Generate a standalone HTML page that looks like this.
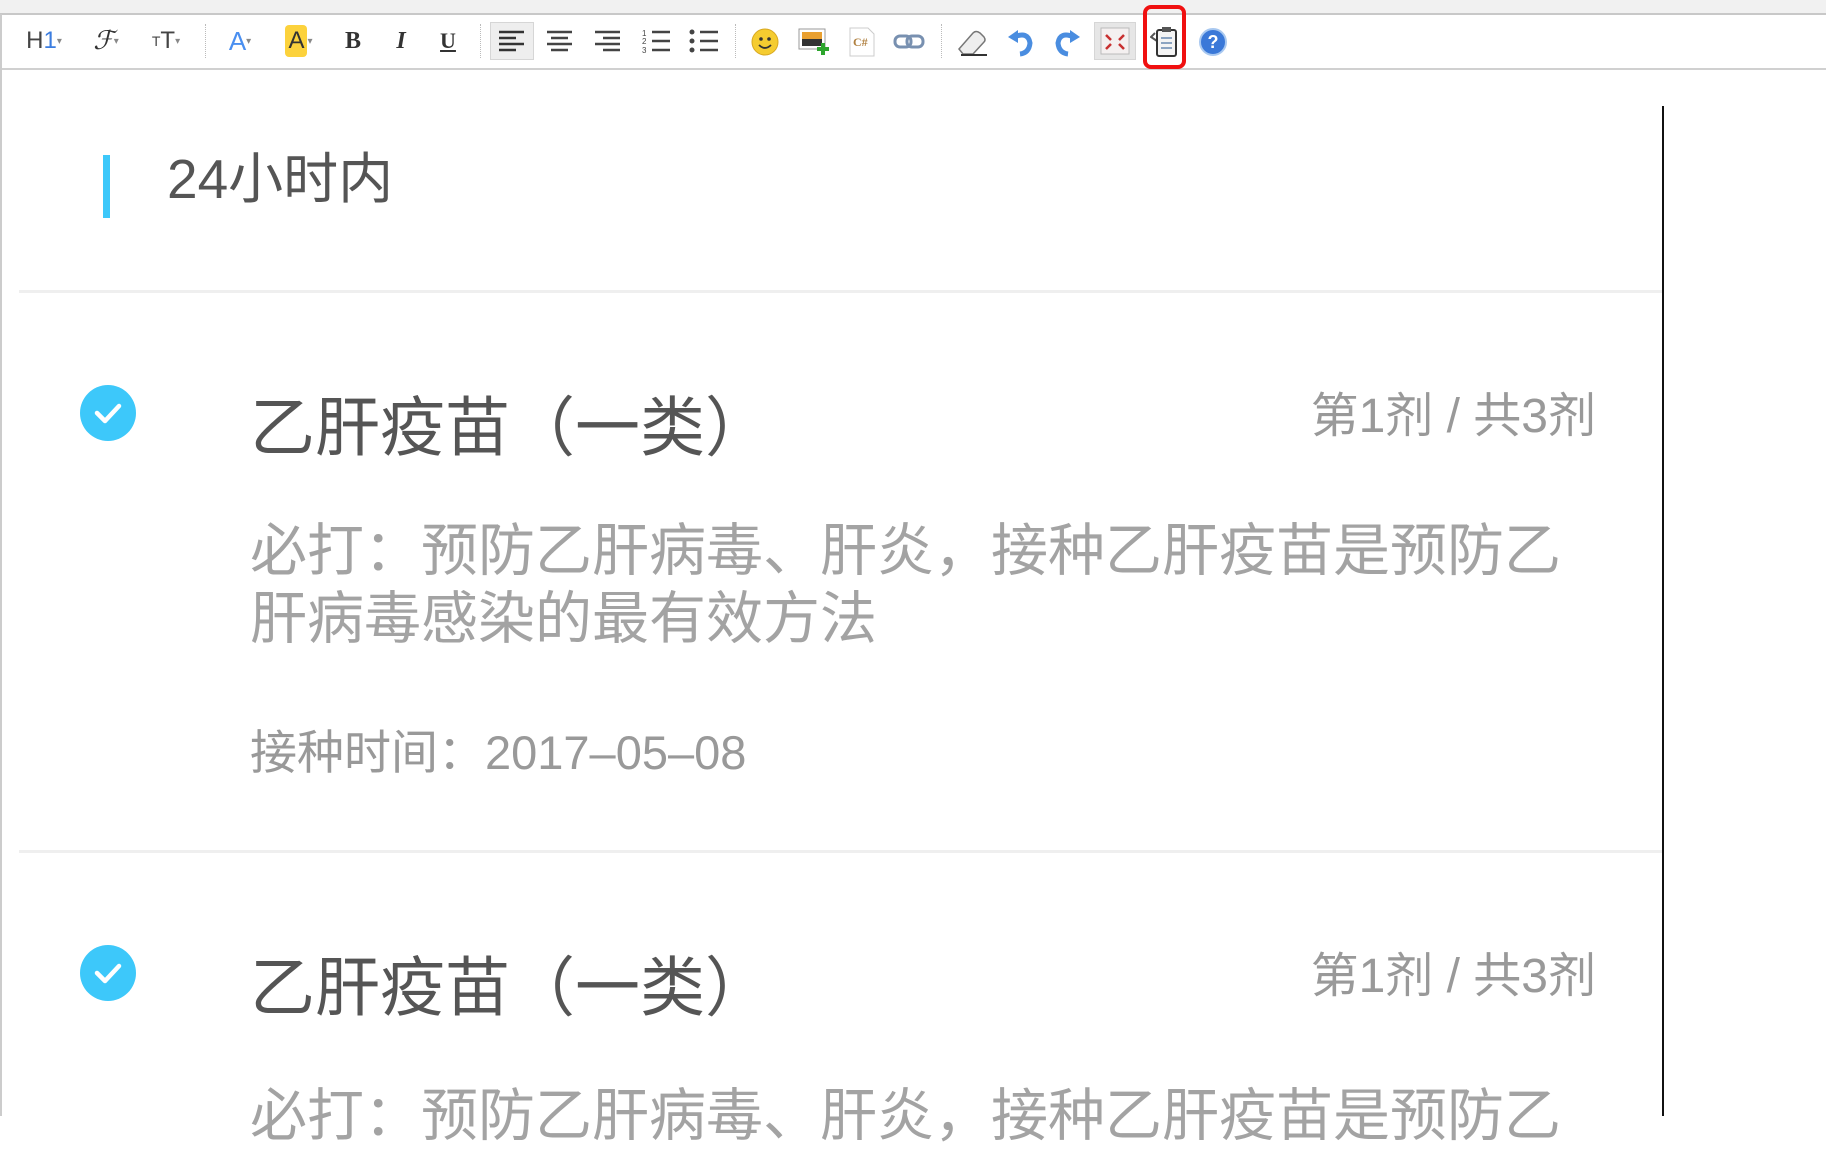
<!DOCTYPE html>
<html><head><meta charset="utf-8"><style>
*{margin:0;padding:0;box-sizing:border-box}
body{width:1826px;height:1116px;overflow:hidden;background:#fff;position:relative;font-family:"Liberation Sans","Noto Sans CJK SC",sans-serif}
.a{position:absolute;line-height:1;white-space:nowrap}
.ic{position:absolute;top:26px;height:30px;display:flex;align-items:center;justify-content:center;font-size:22px;color:#333}
.sep{position:absolute;top:24px;height:34px;border-left:1px dotted #bbb}
.t{color:#555;font-size:65px}
.r{color:#999;font-size:48px}
.d{color:#a3a3a3;font-size:57px;line-height:68px}
.dt{color:#999;font-size:47px}
.chk{position:absolute;width:56px;height:56px;border-radius:50%;background:#3dc8fa}
.hr{position:absolute;left:19px;width:1643px;height:3px;background:#efefef}
</style></head><body>
<div class="a" style="left:0;top:0;width:1826px;height:14px;background:#f1f1f1"></div>
<div class="a" style="left:0;top:13px;width:1826px;height:2px;background:#c8c8c8"></div>
<div class="a" style="left:0;top:68px;width:1826px;height:2px;background:#d0d0d0"></div>
<div class="a" style="left:0;top:14px;width:2px;height:1102px;background:#ccc"></div>

<div class="ic" style="left:20px;width:48px;font-size:24px;color:#444">H<span style="color:#3b7de0">1</span><span style="font-size:10px;color:#888">▾</span></div>
<div class="ic" style="left:86px;width:40px;font-family:'Liberation Serif';font-style:italic;font-size:26px">ℱ<span style="font-size:10px;color:#888;font-style:normal">▾</span></div>
<div class="ic" style="left:145px;width:42px;font-size:24px;color:#444"><span style="font-size:14px">T</span>T<span style="font-size:10px;color:#888">▾</span></div>
<div class="sep" style="left:205px"></div>
<div class="ic" style="left:221px;width:38px;font-size:26px;color:#4a8ff0">A<span style="font-size:10px;color:#888">▾</span></div>
<div class="ic" style="left:277px;width:44px;font-size:24px"><span style="background:#fcd23c;border-radius:4px;padding:2px 3px;color:#333">A</span><span style="font-size:10px;color:#888">▾</span></div>
<div class="ic" style="left:340px;width:26px;font-family:'Liberation Serif';font-weight:bold;font-size:24px">B</div>
<div class="ic" style="left:388px;width:26px;font-family:'Liberation Serif';font-weight:bold;font-style:italic;font-size:24px">I</div>
<div class="ic" style="left:435px;width:26px;font-family:'Liberation Serif';font-weight:bold;text-decoration:underline;font-size:22px">U</div>
<div class="sep" style="left:480px"></div>
<div class="a" style="left:490px;top:22px;width:44px;height:38px;background:#eee;border:1px solid #d6d6d6"></div>
<svg class="a" style="left:498px;top:30px" width="28" height="22"><g stroke="#333" stroke-width="2.5"><path d="M1 2h25M1 8h17M1 14h25M1 20h17"/></g></svg>
<svg class="a" style="left:546px;top:30px" width="28" height="22"><g stroke="#444" stroke-width="2.5"><path d="M1 2h25M5 8h17M1 14h25M5 20h17"/></g></svg>
<svg class="a" style="left:594px;top:30px" width="28" height="22"><g stroke="#444" stroke-width="2.5"><path d="M1 2h25M9 8h17M1 14h25M9 20h17"/></g></svg>
<svg class="a" style="left:641px;top:28px" width="30" height="26"><g stroke="#444" stroke-width="2.5"><path d="M11 4h18M11 13h18M11 22h18"/></g><g fill="#444" font-size="8" font-family="Liberation Sans"><text x="1" y="8">1</text><text x="1" y="16">2</text><text x="1" y="25">3</text></g></svg>
<svg class="a" style="left:689px;top:28px" width="30" height="26"><g stroke="#444" stroke-width="2.5"><path d="M11 4h18M11 13h18M11 22h18"/></g><g fill="#444"><circle cx="3" cy="4" r="2.5"/><circle cx="3" cy="13" r="2.5"/><circle cx="3" cy="22" r="2.5"/></g></svg>
<div class="sep" style="left:735px"></div>
<svg class="a" style="left:751px;top:28px" width="28" height="28"><circle cx="14" cy="14" r="13" fill="#f5cc30" stroke="#d8a820"/><circle cx="10" cy="11" r="1.8" fill="#333"/><circle cx="18" cy="11" r="1.8" fill="#333"/><path d="M8 17q6 6 12 0" stroke="#333" stroke-width="1.8" fill="none"/></svg>
<svg class="a" style="left:798px;top:27px" width="32" height="30"><rect x="1" y="2" width="26" height="20" fill="#fff" stroke="#999"/><rect x="4" y="5" width="20" height="14" fill="#e9a030"/><rect x="4" y="12" width="20" height="7" fill="#333"/><path d="M25 16v12M19 22h12" stroke="#2da52d" stroke-width="4"/></svg>
<svg class="a" style="left:848px;top:27px" width="28" height="30"><path d="M2 1h18l6 6v22H2z" fill="#fff" stroke="#ccc"/><text x="5" y="19" font-size="12" font-weight="bold" fill="#b08040" font-family="Liberation Serif">C#</text></svg>
<svg class="a" style="left:893px;top:33px" width="32" height="18"><g fill="none" stroke="#7890b0" stroke-width="3"><rect x="2" y="3" width="16" height="11" rx="5"/><rect x="14" y="3" width="16" height="11" rx="5"/></g></svg>
<div class="sep" style="left:941px"></div>
<svg class="a" style="left:955px;top:27px" width="34" height="30"><path d="M4 22L18 6q3-3 7 0l4 4q2 3 0 5L18 27H8z" fill="#eee" stroke="#777" stroke-width="1.5"/><path d="M6 28h26" stroke="#333" stroke-width="2"/></svg>
<svg class="a" style="left:1006px;top:27px" width="28" height="30"><path d="M8 10q14-6 16 6q-1 10-10 11" fill="none" stroke="#4a8de0" stroke-width="5"/><path d="M2 10l10-7v13z" fill="#4a8de0"/></svg>
<svg class="a" style="left:1054px;top:27px" width="28" height="30"><path d="M20 10q-14-6-16 6q1 10 10 11" fill="none" stroke="#4a8de0" stroke-width="5"/><path d="M26 10l-10-7v13z" fill="#4a8de0"/></svg>
<div class="a" style="left:1094px;top:22px;width:42px;height:38px;background:#e6e6e6;border:1px solid #d6d6d6"></div>
<svg class="a" style="left:1100px;top:27px" width="30" height="28"><rect x="1" y="1" width="28" height="26" fill="#f4f0f0" stroke="#bbb"/><g stroke="#c83030" stroke-width="2.5"><path d="M6 8l5 5M24 8l-5 5M6 22l5-5M24 22l-5-5"/></g></svg>
<div class="a" style="left:1143px;top:5px;width:43px;height:64px;border:4px solid #f01010;border-radius:8px"></div>
<svg class="a" style="left:1150px;top:25px" width="30" height="34"><path d="M5 8l-4 4 6 4" fill="none" stroke="#555" stroke-width="2"/><rect x="7" y="5" width="19" height="26" rx="2" fill="#f4f4f4" stroke="#333" stroke-width="2"/><rect x="12" y="2" width="9" height="5" fill="#555"/><g stroke="#6a8ab0" stroke-width="1.5"><path d="M11 13h11M11 18h11M11 23h11"/></g></svg>
<svg class="a" style="left:1198px;top:27px" width="30" height="30"><circle cx="15" cy="15" r="13" fill="#3a78d8" stroke="#a8c8f0" stroke-width="2"/><text x="15" y="21" text-anchor="middle" font-size="18" font-weight="bold" fill="#fff" font-family="Liberation Sans">?</text></svg>

<div class="a" style="left:1662px;top:106px;width:2px;height:1010px;background:#111"></div>

<div class="a" style="left:103px;top:155px;width:7px;height:63px;background:#3dc8fa"></div>
<div class="a" style="left:167px;top:152px;font-size:55px;color:#555">24小时内</div>
<div class="hr" style="top:290px"></div>

<div class="chk" style="left:80px;top:385px"></div>
<svg class="a" style="left:80px;top:385px" width="56" height="56"><path d="M17 28l8 8 14-15" fill="none" stroke="#fff" stroke-width="4.5" stroke-linecap="round" stroke-linejoin="round"/></svg>
<div class="a t" style="left:250px;top:395px">乙肝疫苗（一类）</div>
<div class="a r" style="right:230px;top:393px">第1剂 / 共3剂</div>
<div class="a d" style="left:250px;top:517px">必打：预防乙肝病毒、肝炎，接种乙肝疫苗是预防乙<br>肝病毒感染的最有效方法</div>
<div class="a dt" style="left:250px;top:729px">接种时间：2017–05–08</div>
<div class="hr" style="top:850px"></div>

<div class="chk" style="left:80px;top:945px"></div>
<svg class="a" style="left:80px;top:945px" width="56" height="56"><path d="M17 28l8 8 14-15" fill="none" stroke="#fff" stroke-width="4.5" stroke-linecap="round" stroke-linejoin="round"/></svg>
<div class="a t" style="left:250px;top:955px">乙肝疫苗（一类）</div>
<div class="a r" style="right:230px;top:953px">第1剂 / 共3剂</div>
<div class="a d" style="left:250px;top:1082px">必打：预防乙肝病毒、肝炎，接种乙肝疫苗是预防乙</div>
</body></html>
